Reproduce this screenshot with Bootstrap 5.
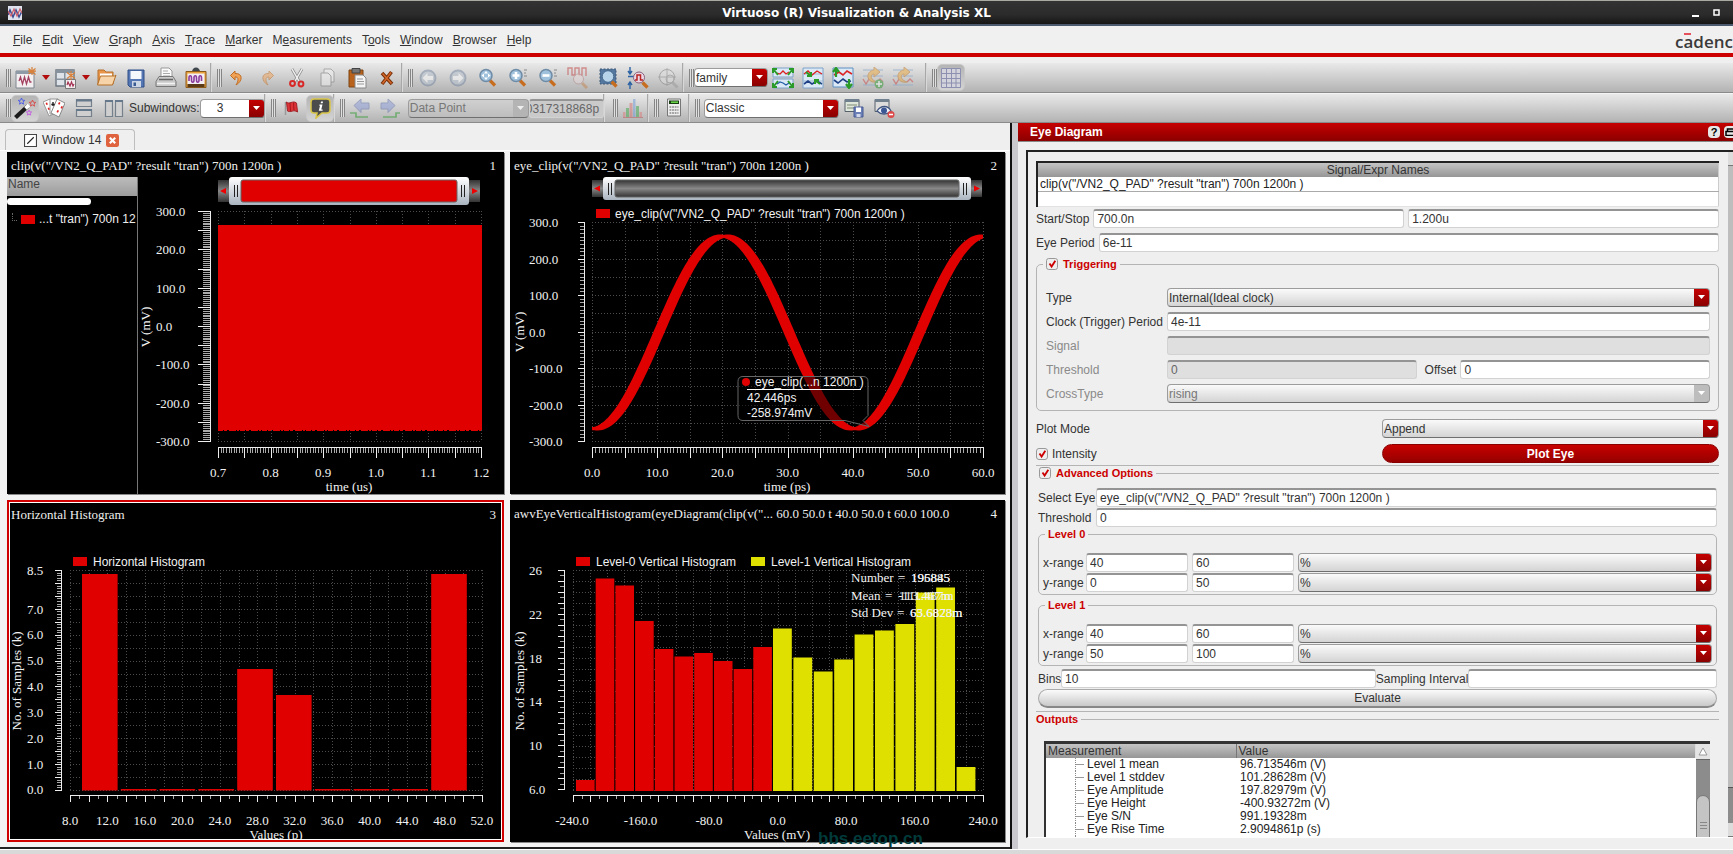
<!DOCTYPE html>
<html lang="en">
<head>
<meta charset="utf-8">
<meta name="viewport" content="width=device-width, initial-scale=1">
<title>Virtuoso (R) Visualization &amp; Analysis XL</title>
<link rel="stylesheet" href="https://cdn.jsdelivr.net/npm/bootstrap@5.3.0/dist/css/bootstrap.min.css">
<style>
:root{--red:#c00;--ui:"Liberation Sans",Arial,sans-serif;--plot:"Liberation Serif","Times New Roman",serif}
body{font-family:var(--ui);font-size:12px;line-height:14px;color:#333;background:#efefef}
button,input,select{font-family:inherit}
/* title bar and menu */
.titlebar{height:26px;flex:none;background:linear-gradient(#333,#2b2b2b 60%,#161616);border-top:1px solid #a9aba2;border-bottom:2px solid #4b5a6e;color:#fff;padding-right:12px}
.titlebar h1{font:700 12px/20px "DejaVu Sans",sans-serif}
.titlebar button{width:9px;height:9px;border:0;background:none;padding:0;display:flex}
.menubar{height:27px;flex:none;background:#f0f0f0;padding-top:1px}
.menubar .nav{gap:10px;padding-left:13px}
.menubar .nav-link{padding:0;color:#333}
.brand{width:58px;font:600 17px/20px "Open Sans",sans-serif;color:#3a3a3a;white-space:nowrap}
.brand .bar{position:relative}
.brand .bar::before{content:"";position:absolute;left:1px;right:2px;top:3px;height:2px;background:#e5505a}
.redline{height:4px;flex:none;background:var(--red);margin-bottom:6px}
/* toolbars */
.toolrow{height:30px;flex:none;background:linear-gradient(#e9e9e9,#b3b3b3);border-bottom:1px solid #8a8a8a}
.toolrow + .toolrow{border-top:1px solid #f4f4f4}
.toolset{padding-left:5px;border-right:1px solid #d8d8d8;box-shadow:inset -1px 0 #a8a8a8}
.toolset:first-child{padding-left:6px}
.toolset:last-child{border:0;box-shadow:none}
.grip{width:5px;height:18px;background:repeating-linear-gradient(90deg,#858585 0 1px,#e0e0e0 1px 2px);flex:none}
.tool{width:30px;height:28px;border:0;background:none;padding:0;display:flex;align-items:center;justify-content:center}
.tool svg{width:22px;height:22px}
.tool:disabled{opacity:.5}
.more{width:10px}
.more svg{width:8px;height:5px}
.pressed{width:28px;height:27px;background:linear-gradient(#b4b4b4,#d4d4d4);border-radius:5px;border:1px solid #c8c8c8}
/* fields */
.form-control,.form-select{height:19px;min-height:0;font-size:12px;line-height:14px;padding:0 3px;border-radius:3px;color:#333}
.form-control{background:#fff;border:1px solid #d2d2d2;border-top:2px solid #949494}
.form-control:disabled{background:#dfdfdf;color:#666}
.form-select{border:1px solid #9c9c9c;border-bottom-color:#6f6f6f;border-radius:4px;padding:0 18px 0 1px;
 background:url("data:image/svg+xml,%3Csvg xmlns='http://www.w3.org/2000/svg' viewBox='0 0 15 19'%3E%3Cdefs%3E%3ClinearGradient id='g' x2='0' y2='1'%3E%3Cstop stop-color='%23c80000'/%3E%3Cstop offset='1' stop-color='%23860000'/%3E%3C/linearGradient%3E%3C/defs%3E%3Cpath fill='url(%23g)' d='M0 0h15v19H0z'/%3E%3Cpath fill='%23fff' d='M4 7h7l-3.500 4z'/%3E%3C/svg%3E") right center/15px 19px no-repeat,linear-gradient(#fafafa,#d4d4d4)}
.form-select:disabled{color:#777;background:url("data:image/svg+xml,%3Csvg xmlns='http://www.w3.org/2000/svg' viewBox='0 0 15 19'%3E%3Cpath fill='%23bdbdbd' d='M0 0h15v19H0z'/%3E%3Cpath fill='%23fff' d='M4 7h7l-3.500 4z'/%3E%3C/svg%3E") right center/15px 19px no-repeat,linear-gradient(#fafafa,#d4d4d4)}
.toolrow .form-select{background-color:#fff;width:auto}
.toolrow .form-select:not(:disabled){background-image:url("data:image/svg+xml,%3Csvg xmlns='http://www.w3.org/2000/svg' viewBox='0 0 15 19'%3E%3Cdefs%3E%3ClinearGradient id='g' x2='0' y2='1'%3E%3Cstop stop-color='%23c80000'/%3E%3Cstop offset='1' stop-color='%23860000'/%3E%3C/linearGradient%3E%3C/defs%3E%3Cpath fill='url(%23g)' d='M0 0h15v19H0z'/%3E%3Cpath fill='%23fff' d='M4 7h7l-3.500 4z'/%3E%3C/svg%3E")}
.toolrow .form-select:disabled{background-image:url("data:image/svg+xml,%3Csvg xmlns='http://www.w3.org/2000/svg' viewBox='0 0 15 19'%3E%3Cpath fill='%23b4b4b4' d='M0 0h15v19H0z'/%3E%3Cpath fill='%23eee' d='M4 7h7l-3.500 4z'/%3E%3C/svg%3E"),linear-gradient(#d0d0d0,#bdbdbd)}
.toolrow .w-fam{width:74px}.toolrow .w-sub{width:65px;padding-left:16px}.toolrow .w-pt{width:121px;margin-left:3px}.toolrow .w-cls{width:135px}
.w-val{width:75px;padding:0;text-indent:-4px}
.toolrow .form-control:disabled{background:#cacaca}
.form-check-input{width:12px;height:12px;margin:0;border:1px solid #999;border-radius:2px;background-color:#e9e9e9;flex:none}
.form-check-input:checked{border-color:#999;background-color:#eee;background-image:url("data:image/svg+xml,%3Csvg xmlns='http://www.w3.org/2000/svg' viewBox='0 0 12 12'%3E%3Cpath d='M3 5.500l2.500 3.500L10 2' fill='none' stroke='%23c00' stroke-width='2.200'/%3E%3C/svg%3E")}
/* work area */
.work{display:grid;grid-template-columns:1018fr 715fr;grid-template-rows:minmax(0,1fr);flex:1 1 0;min-height:0}
.viewer{border-right:6px solid #c9c9ce;min-width:0;min-height:0}
.viewer-in{border-right:2px solid #111;background:#efefef;min-height:0}
.tab-strip{height:28px;flex:none;padding:6px 0 0 5px;border-bottom:1px solid #fff}
.tab-item{width:130px;height:21px;border:1px solid #bdbdbd;border-bottom:0;border-radius:4px 4px 0 0;padding-left:18px;gap:5px}
.tab-item svg{width:13px;height:13px;flex:none}
.tab-item button{border:0;background:none;padding:0;display:flex}
.plots{display:grid;flex:1 1 0;min-height:0;grid-template-columns:497fr 495fr;grid-template-rows:minmax(0,1fr) minmax(0,1fr);gap:6px;padding:1px 5px 5px 7px;background:#f3f3f3;border-bottom:2px solid #222}
.plot{background:#000;color:#eee;min-width:0;min-height:0;overflow:hidden;box-shadow:1px 1px #888}
.plot.active{border:2px solid #d00000;box-shadow:inset 0 0 0 1px #fff}
.plot-head{height:25px;font:13px/18px var(--plot);padding:5px 8px 0 4px;flex:none}
.active .plot-head{padding:4px 6px 0 2px}
.plot svg{width:100%;height:100%;display:block}
.active .inner{margin:0 1px 1px}
.tree{width:131px;border-right:1px solid #777;flex:none}
.tree-head{height:19px;background:linear-gradient(#bcbcbc,#9c9c9c);color:#444;padding:0 1px}
.pill{width:84px;height:7px;background:#fff;border-radius:4px;margin:2px 0 7px}
.swatch{width:14px;height:9px;background:#e10000;flex:none}
.twig{width:5px;height:8px;border-left:1px dotted #666;border-bottom:1px dotted #666;margin:0 4px 4px 5px}
svg text{fill:#f2f2f2;font-family:var(--plot);font-size:13px}
svg text.sans{font-family:var(--ui);font-size:12px}
.mid{text-anchor:middle}
.watermark{position:absolute;left:81%;bottom:-2px;font:700 17px/20px var(--ui);color:#003b3b}
/* dock */
.dock-head{height:19px;background:linear-gradient(#c60000,#8b0000);border-bottom:1px solid #888;color:#fff;padding-left:12px;flex:none}
.dock-head h2{font:700 12px/16px var(--ui)}
.round{width:12px;height:12px;border:0;border-radius:4px;background:#e6e6e6;color:#000;font:700 11px/12px var(--ui);padding:0;flex:none}
.round.half-out{width:9px;border-radius:4px 0 0 4px}
.pane{margin:8px 0 11px 8px;border:2px solid #222;border-right:0;border-bottom:1px solid #fff}
.pane-body{padding:9px 9px 0 8px;min-width:0}
.vbar{width:5px;background:#9a9a9a;flex:none}
.vbar .end{height:14px;background:#dcdcdc;border-bottom:1px solid #777}
.vbar .run{background:#bdbdbd;border-bottom:1px solid #555;flex:634}
.vbar .rest{background:#8c8c8c;flex:36}
.names{width:100%;border:2px solid #222;border-right:1px solid #ccc;border-bottom:0;background:#fff}
.names th{height:14px;line-height:14px;background:linear-gradient(#c4c4c4,#969696);font-weight:400;text-align:center;padding:0}
.names td{height:14px;line-height:14px;padding:0 2px;border-bottom:1px solid #aaa;color:#222}
.names .blank td{height:15px;border-bottom:1px solid #e2e2e2}
fieldset{min-width:0}
legend{float:none;width:auto;font:700 11px/14px var(--ui);color:var(--red);margin:0;padding:0 3px;display:flex;align-items:center;gap:5px}
.box{border:1px solid #b4b4b4;border-radius:5px}
.topline{border-top:1px solid #b4b4b4}
.rows5{display:grid;gap:5px}
.trig{margin-top:5px;padding:17px 8px 7px 9px}
.trig .f-label{width:121px;flex:none}
.trig legend{margin-left:-3px}
.half{flex:1 1 0;min-width:0}
.dis{color:#8a8a8a}
.red-btn{height:19px;border:1px solid #8a0000;border-radius:10px;background:linear-gradient(#c80000,#960000);color:#fff;font-weight:700;padding:0}
.gray-btn{height:19px;border:1px solid #aaa;border-bottom:2px solid #888;border-radius:10px;background:linear-gradient(#fbfbfb,#c9c9c9);color:#333;padding:0}
.level{padding:12px 4px 2px 4px}
.level legend{margin-left:2px}
.level .f-label{width:43px;flex:none;margin-right:-4px}
.level .num{width:102px;flex:none}
.out{border:3px solid #333;border-width:3px 0 0 2px;background:#fff;margin:15px 9px 0 8px}
.out table{width:100%}
.out th{height:14px;background:linear-gradient(#c4c4c4,#969696);font-weight:400;padding:0 2px;border-right:1px solid #777}
.out th:last-child{border-right:1px solid #ddd}
.out td{padding:0 4px;height:13px;line-height:13px;color:#222}
.out td:first-child{padding-left:29px;width:190px}
.out td span{display:inline-block;border-left:1px dotted #888;padding-left:11px;background:linear-gradient(#999,#999) 0 6px/8px 1px no-repeat}
.obar{width:14px;background:#8c8c8c;flex:none}
.obar .up{height:16px;background:#e4e4e4;border-bottom:1px solid #666;display:flex;align-items:center;justify-content:center}
.obar .thumb{margin-top:35px;height:60px;background:#c4c4c4;border:1px solid #777;border-radius:7px;display:flex;align-items:center;justify-content:center}
.one{margin-top:1px}.two{margin-top:2px}.three{margin-top:3px}.five{margin-top:5px}
.gap-six{gap:6px}
.wide{width:337px;flex:none}
.adv{padding:8px 2px 0}
.s-label{width:58px;flex:none}.b-label{width:23px;flex:none}
.bins{flex:315 1 0}.intv{flex:247 1 0}
.status{height:5px;background:#d9d9d9;border-top:1px solid #fff;flex:none}
</style>
</head>
<body class="vh-100 d-flex flex-column overflow-hidden">

<svg class="position-absolute" width="0" height="0" xmlns="http://www.w3.org/2000/svg">
 <symbol id="newwin" viewBox="0 0 22 22"><path d="M1 4h18v17H1z" fill="#f3eef0" stroke="#7c8690"/><path d="M1 4h18v3H1z" fill="#8e9aa6"/><path d="M4 14l1.500-4 2 7 2-7 2 7 2-7 1.500 5h1.500" fill="none" stroke="#a34060" stroke-width="1.300"/><path d="M17 0v8M13.500 1.500l7 6M13.500 7l7-5.500M13 4.200h8" stroke="#d9803a" stroke-width="1.200"/></symbol>
 <symbol id="newsub" viewBox="0 0 22 22"><path d="M1 3h18v16H1z" fill="#dde3e8" stroke="#6c7680" stroke-width="1.400"/><path d="M1 3h18v3H1zM9 6h1.500v13H9zM1 11.500h18V13H1z" fill="#86929e"/><path d="M10.500 12.500h10v9h-10z" fill="#f3eef0" stroke="#777"/><path d="M12 18l1-3 2 4 1.500-4 1.500 4 1-2" fill="none" stroke="#a33050" stroke-width="1.200"/><path d="M16 4v9M12 5.500l8 6M12 11.500l8-6" stroke="#d9803a" stroke-width="1.200"/></symbol>
 <symbol id="open" viewBox="0 0 22 22"><path d="M3 17V3h6l2 2h7v12z" fill="#e9954a" stroke="#b5702c"/><path d="M5 6.500h12V14H5z" fill="#fff"/><path d="M5.500 9h14l1.500-1-3.500 10H2.500z" fill="#f6d3a8" stroke="#b56f27"/></symbol>
 <symbol id="save" viewBox="0 0 22 22"><path d="M3 3h16v17H5l-2-2z" fill="#5578b4" stroke="#2f4c86"/><path d="M5.500 4h11v8h-11z" fill="#f4f7fb"/><path d="M7 14h9v6H7z" fill="#cdd6e4"/><path d="M8.500 15.500h2.500v3.500H8.500z" fill="#385992"/></symbol>
 <symbol id="print" viewBox="0 0 22 22"><path d="M6 11V1h8l3 3v7z" fill="#fafafa" stroke="#999"/><path d="M8 4h5M8 6.500h7M8 9h7" stroke="#aaa"/><path d="M4 9.500h14l3 5v5H1v-5z" fill="#c9c9c9" stroke="#777"/><path d="M4 12.500h14" stroke="#666" stroke-width="1.500"/><path d="M2 16.500h18" stroke="#f4f4f4" stroke-width="1.500"/></symbol>
 <symbol id="snap" viewBox="0 0 22 22"><path d="M7 5c0-6 8-6 8 0z" fill="#3f464c"/><path d="M1 4.500h20v16H1z" fill="#e9a13a" stroke="#8a5a1d"/><path d="M2.500 6.500h17v11h-17z" fill="#f3edf4"/><path d="M4 14v-3c0-3 2.500-3 2.500 0v2c0 3 2.500 3 2.500 0v-2c0-3 2.500-3 2.500 0v2c0 3 2.500 3 2.500 0v-2c0-3 2.500-3 2.500 0v3" fill="none" stroke="#8b3c9c" stroke-width="1.600"/><path d="M2.500 17h17v3h-17z" fill="#5b3b17"/></symbol>
 <symbol id="undo" viewBox="0 0 22 22"><path d="M9 4L4.500 8.500 9 13v-3c3-.5 4.500 2.500 1 8 7-4 7-12-1-11.500z" fill="#f0a257" stroke="#c06d22"/></symbol>
 <symbol id="redo" viewBox="0 0 22 22"><path d="M13 4l4.500 4.500L13 13v-3c-3-.5-4.500 2.500-1 8-7-4-7-12 1-11.500z" fill="#f0a257" stroke="#c06d22"/></symbol>
 <symbol id="cut" viewBox="0 0 22 22"><path d="M6 2l7.500 13M16 2L8.500 15" stroke="#8a8a8a" stroke-width="2.800"/><path d="M6 2l7.500 13M16 2L8.500 15" stroke="#f2f2f2" stroke-width="1.500"/><g fill="none" stroke="#d82828" stroke-width="2"><circle cx="6.500" cy="16.500" r="2.400"/><circle cx="15" cy="17" r="2.400"/></g></symbol>
 <symbol id="copy" viewBox="0 0 22 22"><path d="M8 2h7l3 3v10H8z" fill="#f4f4f4" stroke="#777"/><path d="M5 6h7l3 3v10H5z" fill="#f4f4f4" stroke="#777"/></symbol>
 <symbol id="paste" viewBox="0 0 22 22"><path d="M3 3h14v17H3z" fill="#b9621c" stroke="#7d4413"/><path d="M6 1.500h8V6H6z" fill="#777" stroke="#444"/><path d="M9 8h8l3 3v10H9z" fill="#f4f4f4" stroke="#888"/><path d="M11 12h6M11 14.500h7M11 17h7" stroke="#999"/></symbol>
 <symbol id="del" viewBox="0 0 22 22"><path d="M6 6l10 11M15.500 5L6 17" stroke="#7a3008" stroke-width="3.600"/><path d="M6.500 6.500l9 10M15 5.500L6.500 16.500" stroke="#d4672a" stroke-width="1.500"/></symbol>
 <symbol id="back" viewBox="0 0 22 22"><circle cx="11" cy="11" r="7.500" fill="#b3bfcc" stroke="#7385a0" stroke-width="1.800"/><path d="M10.500 6v3H16v4h-5.500v3L5.500 11z" fill="#fff"/></symbol>
 <symbol id="fwd" viewBox="0 0 22 22"><circle cx="11" cy="11" r="7.500" fill="#b3bfcc" stroke="#7385a0" stroke-width="1.800"/><path d="M11.500 6v3H6v4h5.500v3l5-5z" fill="#fff"/></symbol>
 <symbol id="lens" viewBox="0 0 22 22"><path d="M13 13.500l5 5" stroke="#c66d20" stroke-width="3.200"/><circle cx="9" cy="8.500" r="6" fill="#9fc1dc" stroke="#6f8ba6" stroke-width="1.500"/></symbol>
 <symbol id="zfit" viewBox="0 0 22 22"><use href="#lens"/><path d="M9 4l2 2.500H7zM9 13l2-2.500H7zM4.500 8.500L7 6.500v4zM13.500 8.500L11 6.500v4z" fill="#fff"/></symbol>
 <symbol id="zin" viewBox="0 0 22 22"><use href="#lens"/><path d="M9 5v7M5.500 8.500h7" stroke="#fff" stroke-width="2.600"/><path d="M17 3h3M17 6h2M17 9h3" stroke="#888"/></symbol>
 <symbol id="zout" viewBox="0 0 22 22"><use href="#lens"/><path d="M5.500 8.500h7" stroke="#fff" stroke-width="2.600"/><path d="M17 3h3M17 6h2M17 9h3" stroke="#888"/></symbol>
 <symbol id="zwave" viewBox="0 0 22 22"><path d="M1 8V1h4v7h3V1h4v7h3V1h4v8" fill="none" stroke="#c23b3b" stroke-width="1.400"/><g opacity=".7"><path d="M15 16l5 5" stroke="#c66d20" stroke-width="3"/><circle cx="11.500" cy="12" r="5" fill="#f3dede" stroke="#a66"/></g></symbol>
 <symbol id="zarea" viewBox="0 0 22 22"><path d="M3 2h16v15H3z" fill="#54779f" stroke="#3d5876" stroke-dasharray="2 1.500"/><path d="M14.500 14.500l5 5" stroke="#c66d20" stroke-width="3.400"/><circle cx="11" cy="9.500" r="5.800" fill="#b7d3ea" stroke="#45688c"/></symbol>
 <symbol id="zxy" viewBox="0 0 22 22"><path d="M3 0v6M1 4l2 3 2-3M3 22v-6M1 18l2-3 2 3M1 9.500h7" fill="none" stroke="#2b62a4" stroke-width="1.400"/><path d="M15.500 15.500l5 5" stroke="#c66d20" stroke-width="3.400"/><circle cx="12" cy="10.500" r="5.500" fill="#ead8e6" stroke="#86607c"/><path d="M8 13h2V8h3.500v5H16" fill="none" stroke="#b22" stroke-width="1.500"/></symbol>
 <symbol id="zgray" viewBox="0 0 22 22"><path d="M14.500 14.500l6 6" stroke="#999" stroke-width="3"/><circle cx="10" cy="10" r="7.500" fill="#ddd" stroke="#777"/><path d="M10 1v18M1 10h18" stroke="#888"/><circle cx="13" cy="12" r="4" fill="none" stroke="#888"/></symbol>
 <symbol id="strip" viewBox="0 0 22 22"><path d="M1 1h20v9H1zM1 12h20v9H1z" fill="#dbe8f5" stroke="#7ea2c8"/><path d="M5 6l3 1 3-3 3 3 3-2" fill="none" stroke="#d22" stroke-width="1.300"/><path d="M5 17l3-2 3 1 3 2 3-2" fill="none" stroke="#235fa8" stroke-width="1.300"/><path d="M6 8L2 3M16 8l4-5M6 14l-4 5M16 14l4 5M1 6V2h4M21 6V2h-4M1 16v4h4M21 16v4h-4" fill="none" stroke="#2a9b28" stroke-width="2"/></symbol>
 <symbol id="merge" viewBox="0 0 22 22"><path d="M1 1h20v20H1z" fill="#dbe8f5" stroke="#7ea2c8"/><path d="M1 7h20M1 14h20" stroke="#9cb9d6"/><path d="M2 7l4-3 4 4 5-4 5 3" fill="none" stroke="#d22" stroke-width="1.400"/><path d="M2 17l4-3 4 3 5-3 5 3" fill="none" stroke="#1c3f86" stroke-width="1.600"/><path d="M4 5l5 4M9 5v4H5M18 17l-5-4M13 17v-4h4" fill="none" stroke="#2a9b28" stroke-width="2"/></symbol>
 <symbol id="split" viewBox="0 0 22 22"><path d="M1 1h20v19H1z" fill="#dbe8f5" stroke="#5f8fc2"/><path d="M2 8l5-3 4 3 4-4 5 3" fill="none" stroke="#d22" stroke-width="1.600"/><path d="M2 13l4 3 5-4 4 3 4-1" fill="none" stroke="#1c3f86" stroke-width="1.600"/><path d="M4 10V2M1 5l3-4 3 4M17 12v8M14 17l3 4 3-4" fill="none" stroke="#2a9b28" stroke-width="2.200"/></symbol>
 <symbol id="swap" viewBox="0 0 22 22"><path d="M1 3h20M1 9h20M1 18h20" stroke="#8faccd" stroke-width="1.500"/><path d="M1 12l3 5 3-5M15 15l3-3 3 3" fill="none" stroke="#c44" stroke-width="1.400"/><path d="M12 0l6 5-6 5V7c-4 0-4 6 3 8-11 2-12-11-3-12z" fill="#eba438" stroke="#b8772a"/></symbol>
 <symbol id="swapadd" viewBox="0 0 22 22"><use href="#swap"/><circle cx="17" cy="17" r="4.500" fill="#2f9a30"/><path d="M17 14v6M14 17h6" stroke="#fff" stroke-width="1.500"/></symbol>
 <symbol id="grid" viewBox="0 0 22 22"><path d="M1.500 1.500h19v19h-19zM1.500 6.500h19M1.500 11.500h19M1.500 16h19M6.500 1.500v19M11.500 1.500v19M16 1.500v19" fill="#d3d3dc" stroke="#8d90b0"/></symbol>
 <symbol id="wand" viewBox="0 0 22 22"><path d="M1.500 20.500L14 9" stroke="#1b1b1b" stroke-width="4.200"/><path d="M11.500 11.300l3.500-3.200" stroke="#fff" stroke-width="3.800"/><g fill="none" stroke-width=".9"><path d="M7.500 1l.9 2.200 2.400.2-1.800 1.500.6 2.300-2.100-1.300-2 1.300.6-2.300-1.900-1.500 2.400-.2z" stroke="#4a5ae8"/><path d="M18.500 3l.9 2.200 2.400.2-1.800 1.500.6 2.300-2.100-1.300-2 1.300.6-2.300-1.900-1.500 2.400-.2z" stroke="#d84848"/><path d="M15 13l.7 1.800 2 .2-1.500 1.200.5 1.900-1.700-1-1.600 1 .5-1.900-1.600-1.200 2-.2z" stroke="#c25ae0"/></g></symbol>
 <symbol id="cards" viewBox="0 0 22 22"><path d="M0 5l7-3 6 14-7 3z" fill="#fff" stroke="#999"/><path d="M7 2h8v15H7z" fill="#fff" stroke="#999"/><path d="M14 2l8 4-6 14-8-4z" fill="#fff" stroke="#888"/><path d="M3 7l1.500-.6M5 12l1.500-.6M15.500 6l1.500.8M18 10l1.500.8M14 14l1.500.8" stroke="#d22" stroke-width="2.200"/><path d="M10 5v4M8.300 7.500h3.400" stroke="#222" stroke-width="1.400"/></symbol>
 <symbol id="hrows" viewBox="0 0 22 22"><path d="M3.500 2.500h15v7h-15zM3.500 12.500h15v7h-15z" fill="#cfcfcf" stroke="#76808a" stroke-width="1.200"/><path d="M3 2.500h16v2H3zM3 12h16v2H3z" fill="#66788c"/></symbol>
 <symbol id="vcols" viewBox="0 0 22 22"><path d="M2.500 3.500h7v16h-7zM12.500 3.500h7v16h-7z" fill="#cfcfcf" stroke="#76808a" stroke-width="1.200"/><path d="M2 3h8v2H2zM12 3h8v2h-8z" fill="#66788c"/></symbol>
 <symbol id="flag" viewBox="0 0 22 22"><path d="M5.500 5v13" stroke="#999" stroke-width="1.500"/><path d="M6.500 5c3 3 6-2 10 1l1 9c-4-3-7 1-10-1z" fill="#dc3338" stroke="#9f2227"/><path d="M10 6l.5 8M13.500 5.500l.5 8" stroke="#a8181c"/></symbol>
 <symbol id="info" viewBox="0 0 22 22"><path d="M5 2h13c2 0 3 1 3 3v8c0 2-1 3-3 3h-5l-6 5 1-5H5c-2 0-3-1-3-3V5c0-2 1-3 3-3z" fill="#4c4c4c" stroke="#d9c548" stroke-width="1.500"/><path d="M12 4.500h2l-.3 1.800h-2zM10.500 7.500h3l-1.200 5h1.300v1.300H9.800l1.200-5h-.8z" fill="#fff"/></symbol>
 <symbol id="prevpt" viewBox="0 0 22 22"><path d="M5 8.500l7-6.500v4h8v6h-8v3.500z" fill="#8796d6" stroke="#5d6ea5"/><path d="M1 16h6v4h12" fill="none" stroke="#2a9b2a" stroke-width="1.700"/></symbol>
 <symbol id="nextpt" viewBox="0 0 22 22"><path d="M16 8.500L9 2v4H2v6h7v3.500z" fill="#8796d6" stroke="#5d6ea5"/><path d="M21 16h-4v4H4" fill="none" stroke="#2a9b2a" stroke-width="1.700"/></symbol>
 <symbol id="hist" viewBox="0 0 22 22"><path d="M4 11h3v9H4zM14 9h3v11h-3z" fill="#3fa548"/><path d="M7.500 6h3v14h-3z" fill="#d86f6f"/><path d="M11 2h2.500v18H11z" fill="#6d9ad8"/><path d="M17.500 15h2.500v5h-2.500zM1 15h2.500v5H1z" fill="#e07a7a"/><path d="M1 20.500h20" stroke="#b55"/></symbol>
 <symbol id="calc" viewBox="0 0 22 22"><path d="M4.500 2h13v17h-13z" fill="#ededed" stroke="#777"/><path d="M6 3.500h10V7H6z" fill="#183d12"/><path d="M8 5.200h7" stroke="#6adb4a" stroke-width="1.500"/><path d="M6.500 10h9M6.500 13h9M6.500 16h9" stroke="#888" stroke-width="1.600" stroke-dasharray="1.800 .8"/></symbol>
 <symbol id="wssave" viewBox="0 0 22 22"><path d="M2 2.500h14v12H2z" fill="#dfe6da" stroke="#55606b"/><path d="M2 2h14v3H2z" fill="#71808f"/><path d="M4 8h10M4 11h10" stroke="#7c8a74"/><path d="M11 10h9v10h-9z" fill="#6c80b8" stroke="#465a94"/><path d="M13 10.500h5V15h-5z" fill="#fff"/><path d="M13.500 17h4v3h-4z" fill="#d2d9ea"/></symbol>
 <symbol id="wsdel" viewBox="0 0 22 22"><path d="M2 2.500h14v12H2z" fill="#dcdcdc" stroke="#55606b"/><path d="M2 2h14v3H2z" fill="#71808f"/><path d="M4 14c4-6 11-6 14 0-4 4-10 4-14 0z" fill="#eef2fa" stroke="#41557f" stroke-width="1.300"/><circle cx="11" cy="13.500" r="3" fill="#3c5795"/><circle cx="18" cy="17.500" r="3.500" fill="#dc4a4a"/><path d="M16 17.500h4" stroke="#fff" stroke-width="1.500"/></symbol>
 <symbol id="tri" viewBox="0 0 8 5"><path d="M0 0h8L4 5z" fill="#b30c0c"/></symbol>
 <linearGradient id="gr" x2="0" y2="1"><stop stop-color="#333"/><stop offset=".5" stop-color="#888"/><stop offset="1" stop-color="#333"/></linearGradient>
 <linearGradient id="fr" x2="0" y2="1"><stop stop-color="#fff"/><stop offset="1" stop-color="#a9b4c0"/></linearGradient>
</svg>

<header class="titlebar d-flex align-items-center gap-2">
 <svg class="ms-2" width="14" height="14" viewBox="0 0 14 14" aria-hidden="true"><path d="M0 0h14v14H0z" fill="#dfe3ee"/><path d="M0 9l2-5 3 7 3-7 3 7 3-6" fill="none" stroke="#3e4f93" stroke-width="1.500"/><path d="M0 5l3 5 3-7 3 7 3-7 2 4" fill="none" stroke="#cf6069" stroke-width="1.200"/></svg>
 <h1 class="m-0 flex-grow-1 text-center">Virtuoso (R) Visualization &amp; Analysis XL</h1>
 <button aria-label="Minimize"><svg width="9" height="9"><path d="M1 8h7" stroke="#fff" stroke-width="2"/></svg></button>
 <button class="ms-1" aria-label="Maximize"><svg width="9" height="9"><path d="M2 2h5v5H2z" fill="none" stroke="#fff" stroke-width="1.500"/></svg></button>
</header>
<div class="menubar d-flex align-items-center justify-content-between">
 <nav class="nav">
  <a class="nav-link" href="#"><u>F</u>ile</a><a class="nav-link" href="#"><u>E</u>dit</a><a class="nav-link" href="#"><u>V</u>iew</a><a class="nav-link" href="#"><u>G</u>raph</a><a class="nav-link" href="#"><u>A</u>xis</a><a class="nav-link" href="#"><u>T</u>race</a><a class="nav-link" href="#"><u>M</u>arker</a><a class="nav-link" href="#">M<u>e</u>asurements</a><a class="nav-link" href="#">T<u>o</u>ols</a><a class="nav-link" href="#"><u>W</u>indow</a><a class="nav-link" href="#"><u>B</u>rowser</a><a class="nav-link" href="#"><u>H</u>elp</a>
 </nav>
 <div class="brand pt-1">c<span class="bar">a</span>denc</div>
</div>
<div class="redline"></div>

<div class="toolrow d-flex">
 <div class="toolset d-flex align-items-center"><span class="grip"></span>
  <button class="tool" aria-label="New window"><svg><use href="#newwin"/></svg></button><button class="tool more" aria-label="New window options"><svg><use href="#tri"/></svg></button>
  <button class="tool" aria-label="New subwindow"><svg><use href="#newsub"/></svg></button><button class="tool more" aria-label="New subwindow options"><svg><use href="#tri"/></svg></button>
  <button class="tool" aria-label="Open"><svg><use href="#open"/></svg></button><button class="tool" aria-label="Save"><svg><use href="#save"/></svg></button><button class="tool" aria-label="Print"><svg><use href="#print"/></svg></button><button class="tool" aria-label="Snapshot"><svg><use href="#snap"/></svg></button>
 </div>
 <div class="toolset d-flex align-items-center"><span class="grip"></span>
  <button class="tool" aria-label="Undo"><svg><use href="#undo"/></svg></button><button class="tool" aria-label="Redo" disabled><svg><use href="#redo"/></svg></button><button class="tool" aria-label="Cut"><svg><use href="#cut"/></svg></button><button class="tool" aria-label="Copy" disabled><svg><use href="#copy"/></svg></button><button class="tool" aria-label="Paste"><svg><use href="#paste"/></svg></button><button class="tool" aria-label="Delete"><svg><use href="#del"/></svg></button>
 </div>
 <div class="toolset d-flex align-items-center"><span class="grip"></span>
  <button class="tool" aria-label="Back" disabled><svg><use href="#back"/></svg></button><button class="tool" aria-label="Forward" disabled><svg><use href="#fwd"/></svg></button><button class="tool" aria-label="Fit"><svg><use href="#zfit"/></svg></button><button class="tool" aria-label="Zoom in"><svg><use href="#zin"/></svg></button><button class="tool" aria-label="Zoom out"><svg><use href="#zout"/></svg></button><button class="tool" aria-label="Zoom wave" disabled><svg><use href="#zwave"/></svg></button><button class="tool" aria-label="Zoom area"><svg><use href="#zarea"/></svg></button><button class="tool" aria-label="Zoom XY"><svg><use href="#zxy"/></svg></button><button class="tool" aria-label="Zoom circle" disabled><svg><use href="#zgray"/></svg></button>
 </div>
 <div class="toolset d-flex align-items-center pe-2"><span class="grip"></span>
  <select class="form-select w-fam" aria-label="Trace grouping"><option>family</option></select>
  <button class="tool" aria-label="Split strips"><svg><use href="#strip"/></svg></button><button class="tool" aria-label="Combine strips"><svg><use href="#merge"/></svg></button><button class="tool" aria-label="Move strips"><svg><use href="#split"/></svg></button><button class="tool" aria-label="Swap and add" disabled><svg><use href="#swapadd"/></svg></button><button class="tool" aria-label="Swap" disabled><svg><use href="#swap"/></svg></button>
 </div>
 <div class="toolset d-flex align-items-center"><span class="grip"></span>
  <button class="tool pressed" aria-label="Grid"><svg><use href="#grid"/></svg></button>
 </div>
</div>
<div class="toolrow d-flex">
 <div class="toolset d-flex align-items-center"><span class="grip"></span>
  <button class="tool pressed" aria-label="Assistant"><svg><use href="#wand"/></svg></button><button class="tool" aria-label="Cards"><svg><use href="#cards"/></svg></button><button class="tool" aria-label="Rows"><svg><use href="#hrows"/></svg></button><button class="tool" aria-label="Columns"><svg><use href="#vcols"/></svg></button>
  <label for="sub">Subwindows:</label><select id="sub" class="form-select w-sub"><option>3</option></select>
 </div>
 <div class="toolset d-flex align-items-center"><span class="grip"></span>
  <button class="tool" aria-label="Flag"><svg><use href="#flag"/></svg></button><button class="tool pressed" aria-label="Info balloon"><svg><use href="#info"/></svg></button>
 </div>
 <div class="toolset d-flex align-items-center"><span class="grip"></span>
  <button class="tool" aria-label="Previous point" disabled><svg><use href="#prevpt"/></svg></button><button class="tool" aria-label="Next point" disabled><svg><use href="#nextpt"/></svg></button>
  <select class="form-select w-pt" aria-label="Step by" disabled><option>Data Point</option></select><input class="form-control w-val" aria-label="Position" value="0317318868p" disabled>
 </div>
 <div class="toolset d-flex align-items-center ps-2"><span class="grip"></span><button class="tool" aria-label="Histogram" disabled><svg><use href="#hist"/></svg></button></div>
 <div class="toolset d-flex align-items-center"><span class="grip"></span><button class="tool" aria-label="Calculator"><svg><use href="#calc"/></svg></button></div>
 <div class="toolset d-flex align-items-center"><span class="grip me-1"></span>
  <select class="form-select w-cls" aria-label="Workspace"><option>Classic</option></select><button class="tool" aria-label="Save workspace"><svg><use href="#wssave"/></svg></button><button class="tool" aria-label="Delete workspace"><svg><use href="#wsdel"/></svg></button>
 </div>
</div>

<main class="work">
 <section class="viewer d-flex">
  <div class="viewer-in flex-grow-1 d-flex flex-column">
   <div class="tab-strip"><div class="tab-item d-flex align-items-center">
    <svg viewBox="0 0 12 12"><path d="M.5.500h11v11H.5z" fill="#fff" stroke="#444"/><path d="M3 9l6-6" stroke="#222"/></svg><span>Window 14</span>
    <button aria-label="Close tab"><svg viewBox="0 0 12 12"><rect width="12" height="12" rx="2" fill="#e0633f"/><path d="M3.500 3.500l5 5M8.500 3.500l-5 5" stroke="#fff" stroke-width="2"/></svg></button>
   </div></div>
   <div class="plots position-relative">
    <article class="plot d-flex flex-column">
     <div class="plot-head d-flex justify-content-between"><span>clip(v("/VN2_Q_PAD" ?result "tran") 700n 1200n )</span><span>1</span></div>
     <div class="d-flex flex-grow-1 overflow-hidden">
      <div class="tree"><div class="tree-head">Name</div><div class="pill"></div>
       <div class="d-flex align-items-center text-nowrap"><span class="twig"></span><span class="swatch me-1"></span><span>...t "tran") 700n 12</span></div></div>
      <div class="flex-grow-1"><svg id="p1" viewBox="138 176 366 317"></svg></div>
     </div>
    </article>
    <article class="plot d-flex flex-column">
     <div class="plot-head d-flex justify-content-between"><span>eye_clip(v("/VN2_Q_PAD" ?result "tran") 700n 1200n )</span><span>2</span></div>
     <div class="flex-grow-1 overflow-hidden"><svg id="p2" viewBox="510 176 495 317"></svg></div>
    </article>
    <article class="plot active d-flex flex-column">
     <div class="plot-head d-flex justify-content-between"><span>Horizontal Histogram</span><span>3</span></div>
     <div class="inner flex-grow-1 overflow-hidden"><svg id="p3" viewBox="10 526 491 312"></svg></div>
    </article>
    <article class="plot d-flex flex-column">
     <div class="plot-head d-flex justify-content-between"><span>awvEyeVerticalHistogram(eyeDiagram(clip(v("... 60.0 50.0 t 40.0 50.0 t 60.0 100.0</span><span>4</span></div>
     <div class="flex-grow-1 overflow-hidden"><svg id="p4" viewBox="510 524 495 317"></svg></div>
    </article>
    <span class="watermark">bbs.eetop.cn</span>
   </div>
  </div>
 </section>

 <aside class="d-flex flex-column overflow-hidden">
  <div class="dock-head d-flex align-items-center"><h2 class="m-0 flex-grow-1">Eye Diagram</h2>
   <button class="round" aria-label="Help">?</button><button class="round half-out ms-1 d-flex align-items-center" aria-label="Float"><svg class="ms-auto" width="8" height="8" viewBox="0 0 8 8"><path d="M1 3.500h8v4H1zM2.500 3V1H8" fill="none" stroke="#000" stroke-width="1.500"/></svg></button></div>
  <div class="pane d-flex flex-grow-1 overflow-hidden">
   <form class="pane-body flex-grow-1 overflow-hidden" onsubmit="return false">
    <table class="names"><tr><th>Signal/Expr Names</th></tr><tr><td>clip(v("/VN2_Q_PAD" ?result "tran") 700n 1200n )</td></tr><tr class="blank"><td></td></tr></table>
    <div class="d-flex align-items-center two"><label for="start" class="me-1">Start/Stop</label><input id="start" class="form-control half me-1" value="700.0n"><input class="form-control half" aria-label="Stop" value="1.200u"></div>
    <div class="d-flex align-items-center five"><label for="per" class="text-nowrap me-1">Eye Period</label><input id="per" class="form-control" value="6e-11"></div>
    <fieldset class="box trig"><legend><input type="checkbox" class="form-check-input" id="trg" checked><label for="trg">Triggering</label></legend>
     <div class="rows5">
      <div class="d-flex align-items-center"><label class="f-label" for="ty">Type</label><select id="ty" class="form-select"><option>Internal(Ideal clock)</option></select></div>
      <div class="d-flex align-items-center"><label class="f-label" for="ck">Clock (Trigger) Period</label><input id="ck" class="form-control" value="4e-11"></div>
      <div class="d-flex align-items-center"><label class="f-label dis" for="sg">Signal</label><input id="sg" class="form-control" disabled></div>
      <div class="d-flex align-items-center"><label class="f-label dis" for="th">Threshold</label><input id="th" class="form-control half" value="0" disabled><label for="of" class="ms-2 me-1">Offset</label><input id="of" class="form-control half" value="0"></div>
      <div class="d-flex align-items-center"><label class="f-label dis" for="ct">CrossType</label><select id="ct" class="form-select" disabled><option>rising</option></select></div>
     </div>
    </fieldset>
    <div class="pt-2 d-grid gap-six">
     <div class="d-flex align-items-center"><label for="pm" class="flex-grow-1">Plot Mode</label><select id="pm" class="form-select wide"><option>Append</option></select></div>
     <div class="d-flex align-items-center gap-1"><input type="checkbox" class="form-check-input" id="it" checked><label for="it" class="flex-grow-1">Intensity</label><button class="red-btn wide">Plot Eye</button></div>
    </div>
    <div class="topline two"></div>
    <fieldset class="topline"><legend><input type="checkbox" class="form-check-input" id="ad" checked><label for="ad">Advanced Options</label></legend>
     <div class="adv">
      <div class="d-flex align-items-center"><label class="s-label" for="se">Select Eye</label><input id="se" class="form-control" value='eye_clip(v("/VN2_Q_PAD" ?result "tran") 700n 1200n )'></div>
      <div class="d-flex align-items-center one"><label class="s-label" for="t2">Threshold</label><input id="t2" class="form-control" value="0"></div>
      <fieldset class="box level"><legend>Level 0</legend>
       <div class="d-flex align-items-center gap-1"><label class="f-label" for="a1">x-range</label><input id="a1" class="form-control num" value="40"><input class="form-control num" aria-label="x to" value="60"><select class="form-select" aria-label="x unit"><option>%</option></select></div>
       <div class="d-flex align-items-center gap-1 one"><label class="f-label" for="a2">y-range</label><input id="a2" class="form-control num" value="0"><input class="form-control num" aria-label="y to" value="50"><select class="form-select" aria-label="y unit"><option>%</option></select></div>
      </fieldset>
      <fieldset class="box level three"><legend>Level 1</legend>
       <div class="d-flex align-items-center gap-1"><label class="f-label" for="b1">x-range</label><input id="b1" class="form-control num" value="40"><input class="form-control num" aria-label="x to" value="60"><select class="form-select" aria-label="x unit"><option>%</option></select></div>
       <div class="d-flex align-items-center gap-1 one"><label class="f-label" for="b2">y-range</label><input id="b2" class="form-control num" value="50"><input class="form-control num" aria-label="y to" value="100"><select class="form-select" aria-label="y unit"><option>%</option></select></div>
      </fieldset>
      <div class="d-flex align-items-center three"><label class="b-label" for="bn">Bins</label><input id="bn" class="form-control bins" value="10"><label for="si" class="text-nowrap">Sampling Interval</label><input id="si" class="form-control intv"></div>
      <button class="gray-btn w-100 one d-block">Evaluate</button>
     </div>
    </fieldset>
    <div class="topline three"></div>
    <fieldset class="topline"><legend class="ps-0">Outputs</legend>
     <div class="out d-flex">
      <div class="flex-grow-1"><table>
       <thead><tr><th>Measurement</th><th>Value</th></tr></thead>
       <tbody>
       <tr><td><span>Level 1 mean</span></td><td>96.713546m (V)</td></tr>
       <tr><td><span>Level 1 stddev</span></td><td>101.28628m (V)</td></tr>
       <tr><td><span>Eye Amplitude</span></td><td>197.82979m (V)</td></tr>
       <tr><td><span>Eye Height</span></td><td>-400.93272m (V)</td></tr>
       <tr><td><span>Eye S/N</span></td><td>991.19328m</td></tr>
       <tr><td><span>Eye Rise Time</span></td><td>2.9094861p (s)</td></tr>
       <tr><td><span>Eye Fall Time</span></td><td>2.7860826p (s)</td></tr>
       </tbody></table></div>
      <div class="obar"><div class="up"><svg width="10" height="9"><path d="M5 1l4 7H1z" fill="#fff" stroke="#999"/></svg></div><div class="thumb"><svg width="7" height="9"><path d="M0 1.500h7M0 4.500h7M0 7.500h7" stroke="#888"/></svg></div></div>
     </div>
    </fieldset>
   </form>
   <div class="vbar d-flex flex-column"><div class="end"></div><div class="run"></div><div class="rest"></div><div class="end"></div></div>
  </div>
 </aside>
</main>
<footer class="status"></footer>

<script src="https://cdn.jsdelivr.net/npm/bootstrap@5.3.0/dist/js/bootstrap.bundle.min.js"></script>
<script>
const RED = '#e10000', YEL = '#e0e000';
const line = (d, c = '#ddd', extra = '') => `<path d="${d}" stroke="${c}" fill="none" shape-rendering="crispEdges" ${extra}/>`;
const txt = (x, y, s, cls = '') => `<text x="${x}" y="${y}" class="${cls}">${s}</text>`;

function gridLines(x0, x1, nx, y0, y1, ny) {
  let d = '';
  for (let i = 0; i <= nx; i++) { const x = Math.round(x0 + (x1 - x0) * i / nx) + .5; d += `M${x} ${y0}V${y1}`; }
  for (let i = 0; i <= ny; i++) { const y = Math.round(y0 + (y1 - y0) * i / ny) + .5; d += `M${x0} ${y}H${x1}`; }
  return line(d, '#4c4c4c', 'stroke-dasharray="1 2"');
}
// ticks: every big-th tick is long
function yTicks(x, y0, y1, n, big, long, short) {
  let d = `M${x + .5} ${y0}V${y1 + 1}`, m = '';
  for (let i = 0; i <= n; i++) {
    const y = Math.round(y0 + (y1 - y0) * i / n) + .5;
    if (i % big) m += `M${x - short} ${y}H${x}`; else d += `M${x - long} ${y}H${x}`;
  }
  return line(m, '#aaa') + line(d, '#eee');
}
function xTicks(y, x0, x1, n, big, long, short) {
  let d = `M${x0} ${y + .5}H${x1 + 1}`, m = '';
  for (let i = 0; i <= n; i++) {
    const x = Math.round(x0 + (x1 - x0) * i / n) + .5;
    if (i % big) m += `M${x} ${y}V${y + short}`; else d += `M${x} ${y}V${y + long}`;
  }
  return line(m, '#aaa') + line(d, '#eee');
}
const yLabels = (x, y0, step, list) => list.map((s, i) => txt(x, y0 + step * i, s)).join('');
const xLabels = (x0, step, y, list) => list.map((s, i) => txt(x0 + step * i, y, s, 'mid')).join('');
const yTitle = (x, y, s) => `<text transform="translate(${x} ${y}) rotate(-90)" class="mid">${s}</text>`;
const bar = (x, y, w, yb, c) => `<rect x="${x}" y="${y}" width="${w}" height="${yb - y}" fill="${c}"/>`;

function slider(x0, x1, y, h, fill) {
  const c = y + h / 2, a = x0 + 11, b = x1 - 11;
  return bar(x0, y, x1 - x0, y + h, 'url(#gr)') +
    `<path d="M${x0 + 2} ${c}l6-3v6zM${x1 - 2} ${c}l-6-3v6z" fill="#e00"/>` +
    `<rect x="${a}" y="${y - 3}" width="${b - a}" height="${h + 6}" rx="3" fill="url(#fr)"/>` +
    `<rect x="${a + 12}" y="${y}" width="${b - a - 24}" height="${h}" rx="2" fill="${fill}" stroke="#666"/>` +
    line(`M${a + 5} ${c - 6}v12M${a + 8} ${c - 6}v12M${b - 8} ${c - 6}v12M${b - 5} ${c - 6}v12`, '#222');
}

// subwindow 1: clipped transient
document.getElementById('p1').innerHTML =
  slider(218, 480, 179, 22, RED) +
  gridLines(218, 481, 10, 210, 440, 2) +
  bar(218, 224, 264, 429, RED) + line('M218 429.5H482', RED, 'stroke-dasharray="5 1 3 2 7 1 2 1"') +
  yTicks(210, 210, 440, 120, 10, 12, 7) + xTicks(446, 218, 481, 100, 10, 11, 6) +
  yLabels(156, 215, 38.3, ['300.0', '200.0', '100.0', '0.0', '-100.0', '-200.0', '-300.0']) +
  xLabels(218, 52.6, 476, ['0.7', '0.8', '0.9', '1.0', '1.1', '1.2']) +
  txt(349, 490, 'time (us)', 'mid') + yTitle(150, 326, 'V (mV)');

// subwindow 2: eye diagram
const wave = x => 331.5 - 96.5 * Math.sin((x - 724) / 260.8 * 2 * Math.PI + Math.PI / 2);
let up = '', dn = '';
for (let x = 586; x <= 992; x += 2) { up += `L${x} ${wave(x - 4).toFixed(1)}`; dn = `L${x} ${wave(x + 4).toFixed(1)}` + dn; }
document.getElementById('p2').innerHTML =
  slider(592, 982, 179, 17, 'url(#gr)') +
  bar(596, 208, 14, 217, RED) + txt(615, 217, 'eye_clip(v("/VN2_Q_PAD" ?result "tran") 700n 1200n )', 'sans') +
  gridLines(592, 983, 12, 221, 440, 12) +
  `<clipPath id="c2"><path d="M592 221h391v219H592z"/></clipPath><path clip-path="url(#c2)" d="M${(up + dn).slice(1)}z" fill="${RED}" stroke="${RED}" stroke-width="3"/>` +
  yTicks(584, 221, 440, 60, 10, 6, 4) + xTicks(446, 592, 983, 120, 10, 11, 6) +
  yLabels(529, 226, 36.5, ['300.0', '200.0', '100.0', '0.0', '-100.0', '-200.0', '-300.0']) +
  xLabels(592, 65.2, 476, ['0.0', '10.0', '20.0', '30.0', '40.0', '50.0', '60.0']) +
  txt(787, 490, 'time (ps)', 'mid') + yTitle(524, 331, 'V (mV)') +
  `<path d="M743 375.500h120q5 0 5 5v34l-5 5 6 6-24-6H743q-5 0-5-5v-34q0-5 5-5z" fill="#000" fill-opacity=".5" stroke="#666"/><circle cx="746" cy="381" r="4" fill="${RED}"/>` +
  line('M747 388.5H861', '#fff') + txt(755, 385, 'eye_clip(...n 1200n )', 'sans') + txt(747, 401, '42.446ps', 'sans') + txt(747, 416, '-258.974mV', 'sans');

// subwindow 3: horizontal histogram
document.getElementById('p3').innerHTML =
  bar(73, 556, 14, 565, RED) + txt(93, 565, 'Horizontal Histogram', 'sans') +
  gridLines(70, 482, 22, 569, 789, 17) +
  [573, 789, 789, 789, 668, 694, 789, 789, 789, 573].map((y, i) => bar(82 + i * 38.8, y - (y === 789 ? 1 : 0), 35.6, 789.5, RED)).join('') +
  yTicks(61, 569, 789, 85, 5, 6, 4) + xTicks(794, 70, 482, 44, 2, 7, 4) +
  txt(27, 574, '8.5') + yLabels(27, 612.5, 25.85, ['7.0', '6.0', '5.0', '4.0', '3.0', '2.0', '1.0', '0.0']) +
  xLabels(70, 37.45, 824, ['8.0', '12.0', '16.0', '20.0', '24.0', '28.0', '32.0', '36.0', '40.0', '44.0', '48.0', '52.0']) +
  txt(276, 838, 'Values (p)', 'mid') + yTitle(21, 680, 'No. of Samples (k)');

// subwindow 4: vertical histograms of both levels
const lv0 = [779, 577.5, 584.5, 620, 648, 655.5, 652, 660, 668, 646];
const lv1 = [627.5, 656.5, 670.5, 658.5, 633.5, 629.5, 623, 591.5, 586.5, 766];
document.getElementById('p4').innerHTML =
  bar(576, 556, 14, 565, RED) + txt(596, 565, 'Level-0 Vertical Histogram', 'sans') +
  bar(751, 556, 14, 565, YEL) + txt(771, 565, 'Level-1 Vertical Histogram', 'sans') +
  gridLines(573, 983, 24, 569, 789, 20) +
  lv0.map((y, i) => bar(576 + i * 19.7, y, 18.6, 790, RED)).join('') +
  lv1.map((y, i) => bar(773 + i * 20.4, y, 18.8, 790, YEL)).join('') +
  yTicks(564, 569, 788, 40, 2, 6, 4) + xTicks(794, 573, 983, 48, 2, 7, 4) +
  yLabels(529, 574, 43.8, ['26', '22', '18', '14', '10', '6.0']) +
  xLabels(572, 68.5, 824, ['-240.0', '-160.0', '-80.0', '0.0', '80.0', '160.0', '240.0']) +
  txt(777, 838, 'Values (mV)', 'mid') + yTitle(524, 680, 'No. of Samples (k)') +
  txt(851, 581, 'Number') + txt(898, 581, '=') + txt(911, 581, '195845') + txt(911, 581, '196885') +
  txt(851, 599, 'Mean') + txt(885, 599, '=') + txt(898, 599, '-111.487m') + txt(899, 599, '113.467m') +
  txt(851, 616, 'Std Dev') + txt(897, 616, '=') + txt(910, 616, '63.6823m') + txt(910, 616, '65.6878m');
</script>
</body>
</html>
